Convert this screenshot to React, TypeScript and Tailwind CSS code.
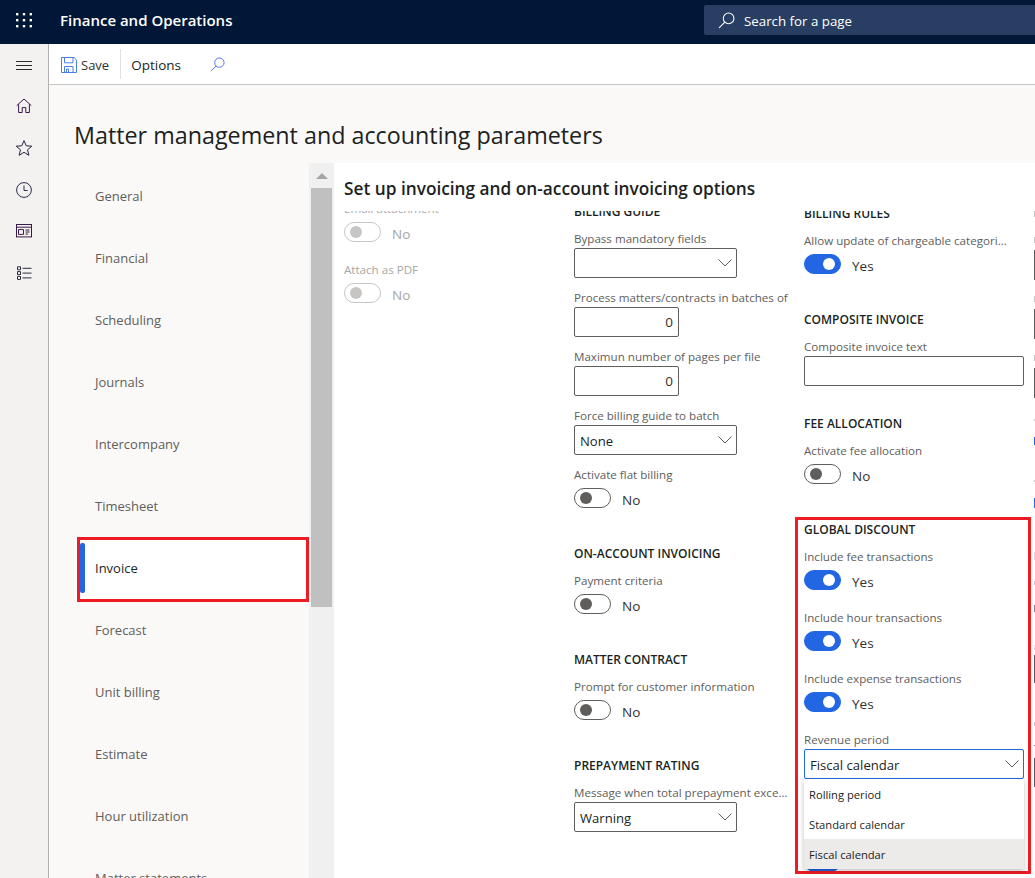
const font = "font-['Open_Sans','Noto_Sans',sans-serif]"

const tabs = [
  "General",
  "Financial",
  "Scheduling",
  "Journals",
  "Intercompany",
  "Timesheet",
  "Invoice",
  "Forecast",
  "Unit billing",
  "Estimate",
  "Hour utilization",
  "Matter statements",
]

function GridIcon() {
  const xs = [0, 6.8, 13.6]
  const ys = [0, 6, 12]
  return (
    <svg width="16" height="15" viewBox="0 0 16 15" fill="#fff">
      {ys.map((y) => xs.map((x) => <rect key={`${x}-${y}`} x={x} y={y} width="2.4" height="2.4" />))}
    </svg>
  )
}

function SearchGlyph({ className, size }: { className?: string; size: number }) {
  return (
    <svg width={size} height={size} viewBox="0 0 16 16" fill="none" stroke="currentColor" strokeWidth="1" className={className}>
      <circle cx="10" cy="6" r="5" />
      <path d="M6.4 9.6 1 15" />
    </svg>
  )
}

function RailIcons() {
  return (
    <div className="flex flex-col items-center">
      <svg width="48" height="40" viewBox="0 0 48 40" stroke="#2b2b2b" strokeWidth="1">
        <path d="M16 17.5h16M16 21.5h16M16 25.5h16" />
      </svg>
      <svg className="mt-[14px]" width="16" height="16" viewBox="0 0 16 16" fill="none" stroke="#3a1a4a" strokeWidth="1">
        <path d="M.7 7.6 8 1l7.3 6.6M2.6 6.2v8.3h3.6V9.6h3.6v4.9h3.6V6.2" />
      </svg>
      <svg className="mt-[25px]" width="18" height="18" viewBox="0 0 18 18" fill="none" stroke="#2a2440" strokeWidth="1">
        <path d="M9 1.6l2.2 5.2 5.6.4-4.3 3.6 1.4 5.5L9 13.3l-4.9 3 1.4-5.5L1.2 7.2l5.6-.4z" />
      </svg>
      <svg className="mt-[25px]" width="16" height="16" viewBox="0 0 16 16" fill="none" stroke="#2a2a50" strokeWidth="1">
        <circle cx="8" cy="8" r="7.4" />
        <path d="M8 3.5V8.5h3.6" />
      </svg>
      <svg className="mt-[26px]" width="16" height="14" viewBox="0 0 16 14" fill="none" stroke="#3a1a4a" strokeWidth="1">
        <rect x=".5" y=".5" width="15" height="12.4" />
        <path d="M.5 3.2h15M2.5 5.6h5v4.8h-5zM9.5 6h4M9.5 8h4M9.5 10h2.5" />
      </svg>
      <svg className="mt-[28px]" width="15" height="14" viewBox="0 0 15 14" fill="none" stroke="#2a2a40" strokeWidth="1">
        <path d="M.5.8h3v3h-3zM.5 5.6h3v3h-3zM.5 10.4h3v3h-3zM5.5 2.3h9M5.5 7.1h9M5.5 11.9h9" />
      </svg>
    </div>
  )
}

function Label({ children, muted }: { children: React.ReactNode; muted?: boolean }) {
  return (
    <div className={`h-[19px] truncate text-[11.6px] leading-[19px] ${muted ? "text-[#a6a6a6]" : "text-[#605e5c]"}`}>{children}</div>
  )
}

function Heading({ children, className }: { children: React.ReactNode; className?: string }) {
  return <div className={`h-[20px] text-[12px] font-semibold leading-[22px] text-[#201f1e] ${className ?? ""}`}>{children}</div>
}

function Toggle({ on, disabled }: { on?: boolean; disabled?: boolean }) {
  const track = on
    ? "justify-end border-[#2266e3] bg-[#2266e3]"
    : disabled
      ? "border-[#c8c6c4] bg-white"
      : "border-[#605e5c] bg-white"
  const knob = on ? "bg-white" : disabled ? "bg-[#c8c6c4]" : "bg-[#605e5c]"
  const text = disabled ? "text-[#a6a6a6]" : "text-[#323130]"
  return (
    <div className="mt-[4px] flex h-[23px] items-start">
      <div className={`flex h-[20px] w-[37px] items-center rounded-full border px-[5px] ${track}`}>
        <div className={`size-[12px] rounded-full ${knob}`} />
      </div>
      <span className={`ml-[11px] mt-[2px] text-[13.5px] leading-[20px] ${text}`}>{on ? "Yes" : "No"}</span>
    </div>
  )
}

function SelectBox({ value, className }: { value?: string; className?: string }) {
  return (
    <div className={`flex h-[30px] items-center justify-between rounded-[2px] border border-[#605e5c] pl-[5px] pr-[4px] text-[13.1px] text-[#201f1e] ${className ?? ""}`}>
      <span className="mt-[3px]">{value}</span>
      <svg width="14" height="8" viewBox="0 0 14 8" fill="none" stroke="#605e5c" strokeWidth="1">
        <path d="M.5.5 7 7l6.5-6.5" />
      </svg>
    </div>
  )
}

function NumberBox() {
  return (
    <div className="flex h-[30px] w-[105px] items-center justify-end rounded-[2px] border border-[#605e5c] pr-[5px] text-[13.5px] text-[#323130]">
      0
    </div>
  )
}

// the next column is scrolled almost out of view, one pixel of it shows at the edge
function EdgeColumn() {
  return (
    <div className="-mt-[10px] w-[20px] shrink-0">
      <div className="mt-[10px] h-[6px] w-px bg-[#c8c6c4]" />
      <div className="mt-[20px] h-[6px] w-px bg-[#c8c6c4]" />
      <div className="mt-[7px] h-[30px] w-px bg-[#605e5c]" />
      <div className="mt-[16px] h-[6px] w-px bg-[#c8c6c4]" />
      <div className="mt-[7px] h-[30px] w-px bg-[#605e5c]" />
      <div className="mt-[16px] h-[6px] w-px bg-[#c8c6c4]" />
      <div className="mt-[7px] h-[30px] w-px bg-[#605e5c]" />
      <div className="mt-[21px] h-[2px] w-px bg-[#c8c6c4]" />
      <div className="mt-[16px] h-[8px] w-px bg-[#2266e3]" />
      <div className="mt-[35px] h-[2px] w-px bg-[#c8c6c4]" />
      <div className="mt-[16px] h-[10px] w-px bg-[#2266e3]" />
      <div className="mt-[44px] h-[8px] w-px bg-[#e1dfdd]" />
      <div className="mt-[21px] h-[4px] w-px bg-[#c8c6c4]" />
      <div className="mt-[20px] h-[7px] w-px bg-[#808080]" />
      <div className="mt-[33px] h-[5px] w-px bg-[#e1dfdd]" />
      <div className="mt-[5px] h-[28px] w-px bg-[#605e5c]" />
      <div className="mt-[39px] h-[4px] w-px bg-[#c8c6c4]" />
      <div className="mt-[19px] h-px w-px bg-[#808080]" />
      <div className="mt-[12px] h-[29px] w-px bg-[#605e5c]" />
    </div>
  )
}

export default function App() {
  return (
    <div className={`relative flex h-[878px] w-[1035px] flex-col overflow-hidden bg-white ${font}`}>
      {/* Top bar */}
      <header className="flex h-[44px] shrink-0 items-center bg-[#001737]">
        <div className="mb-[4px] ml-[16px] flex">
          <GridIcon />
        </div>
        <span className="mb-[4px] ml-[28px] text-[15px] font-semibold text-white">Finance and Operations</span>
        <div className="mb-[4px] ml-auto flex h-[30px] w-[331px] items-center rounded-l-[2px] bg-[#283f63] pl-[14px] text-white">
          <SearchGlyph size={17} />
          <span className="ml-[9px] mt-[3px] text-[13.3px]">Search for a page</span>
        </div>
      </header>

      <div className="flex min-h-0 flex-1">
        <aside className="w-[49px] shrink-0 border-r border-[#b3b0ad] bg-[#f3f2f1]">
          <RailIcons />
        </aside>

        <main className="flex min-w-0 flex-1 flex-col">
          {/* Action pane */}
          <div className="flex h-[41px] shrink-0 items-center border-b border-[#c8c6c4] bg-white text-[#323130]">
            <svg className="ml-[12px] mt-[1px]" width="16" height="16" viewBox="0 0 16 16" fill="none" stroke="#4a7fe8" strokeWidth="1">
              <path d="M.5.5h12.6l2.4 2.4v12.6H.5zM3.5.8v5h8.5v-5M3.5 15.2V9.5h8.5v5.7M5.5 15v-3h2v3" />
            </svg>
            <span className="ml-[4px] mt-[3px] text-[13px]">Save</span>
            <div className="ml-[11px] h-[30px] w-px bg-[#e1dfdd]" />
            <span className="ml-[10px] mt-[2px] text-[13.5px] font-medium text-[#201f1e]">Options</span>
            <SearchGlyph size={15} className="ml-[29px] mt-[1px] text-[#4f6bed]" />
          </div>

          <div className="flex min-h-0 flex-1 flex-col bg-[#faf9f8]">
            <h1 className="ml-[25px] mt-[31px] h-[38px] shrink-0 text-[23.3px] font-normal leading-[38px] text-[#201f1e]">
              Matter management and accounting parameters
            </h1>

            <div className="mt-[9px] flex min-h-0 flex-1">
              {/* Tabs */}
              <nav className="w-[260px] shrink-0 overflow-hidden pt-[3px]">
                {tabs.map((tab) => (
                  <div
                    key={tab}
                    className={`relative flex h-[62px] items-center text-[13px] ${
                      tab === "Invoice" ? "ml-[25px] bg-white pl-[21px] text-[#201f1e]" : "pl-[46px] text-[#605e5c]"
                    }`}
                  >
                    {tab === "Invoice" && <div className="absolute left-[6px] top-[5px] h-[50px] w-[5px] rounded-[2px] bg-[#2266e3]" />}
                    {tab}
                  </div>
                ))}
              </nav>

              {/* Scrollbar */}
              <div className="w-[25px] shrink-0 bg-[#f0f0f0] px-[2px]">
                <div className="flex h-[25px] items-center justify-center">
                  <div className="size-0 border-x-[6px] border-b-[6px] border-x-transparent border-b-[#a6a6a6]" />
                </div>
                <div className="h-[419px] bg-[#c0c0c0]" />
              </div>

              {/* Form */}
              <section className="flex min-w-0 flex-1 flex-col overflow-hidden bg-white">
                <h2 className="ml-[10px] mt-[14px] h-[24px] shrink-0 text-[17.25px] font-semibold leading-[24px] text-[#201f1e]">
                  Set up invoicing and on-account invoicing options
                </h2>

                <div className="mt-[10px] flex min-h-0 flex-1 overflow-hidden pl-[10px]">
                  {/* Column 1 */}
                  <div className="-mt-[12px] w-[230px] shrink-0">
                    <Label muted>Email attachment</Label>
                    <Toggle disabled />
                    <div className="mt-[15px]">
                      <Label muted>Attach as PDF</Label>
                      <Toggle disabled />
                    </div>
                  </div>

                  {/* Column 2 */}
                  <div className="-mt-[10px] w-[230px] shrink-0">
                    <Heading>BILLING GUIDE</Heading>
                    <div className="mt-[8px]">
                      <Label>Bypass mandatory fields</Label>
                      <SelectBox className="w-[163px]" />
                    </div>
                    <div className="mt-[10px]">
                      <Label>Process matters/contracts in batches of</Label>
                      <NumberBox />
                    </div>
                    <div className="mt-[10px]">
                      <Label>Maximun number of pages per file</Label>
                      <NumberBox />
                    </div>
                    <div className="mt-[10px]">
                      <Label>Force billing guide to batch</Label>
                      <SelectBox value="None" className="w-[163px]" />
                    </div>
                    <div className="mt-[10px]">
                      <Label>Activate flat billing</Label>
                      <Toggle />
                    </div>
                    <Heading className="mt-[32px]">ON-ACCOUNT INVOICING</Heading>
                    <div className="mt-[8px]">
                      <Label>Payment criteria</Label>
                      <Toggle />
                    </div>
                    <Heading className="mt-[32px]">MATTER CONTRACT</Heading>
                    <div className="mt-[8px]">
                      <Label>Prompt for customer information</Label>
                      <Toggle />
                    </div>
                    <Heading className="mt-[32px]">PREPAYMENT RATING</Heading>
                    <div className="mt-[8px]">
                      <div className="w-[220px]">
                        <Label>Message when total prepayment exce...</Label>
                      </div>
                      <SelectBox value="Warning" className="w-[163px]" />
                    </div>
                  </div>

                  {/* Column 3 */}
                  <div className="-mt-[8px] w-[230px] shrink-0 pr-[10px]">
                    <Heading>BILLING RULES</Heading>
                    <div className="mt-[8px]">
                      <Label>Allow update of chargeable categori...</Label>
                      <Toggle on />
                    </div>
                    <Heading className="mt-[32px]">COMPOSITE INVOICE</Heading>
                    <div className="mt-[8px]">
                      <Label>Composite invoice text</Label>
                      <div className="h-[30px] rounded-[2px] border border-[#605e5c]" />
                    </div>
                    <Heading className="mt-[27px]">FEE ALLOCATION</Heading>
                    <div className="mt-[8px]">
                      <Label>Activate fee allocation</Label>
                      <Toggle />
                    </div>
                    <Heading className="mt-[32px]">GLOBAL DISCOUNT</Heading>
                    <div className="mt-[8px]">
                      <Label>Include fee transactions</Label>
                      <Toggle on />
                    </div>
                    <div className="mt-[15px]">
                      <Label>Include hour transactions</Label>
                      <Toggle on />
                    </div>
                    <div className="mt-[15px]">
                      <Label>Include expense transactions</Label>
                      <Toggle on />
                    </div>
                    <div className="relative mt-[15px]">
                      <Label>Revenue period</Label>
                      <SelectBox value="Fiscal calendar" className="!border-[#2266e3] bg-white" />
                      {/* Open dropdown */}
                      <div className="absolute left-0 top-[49px] z-10 w-full bg-white text-[11.2px] text-[#201f1e] shadow-[0_2px_5px_rgba(0,0,0,0.25)]">
                        <div className="flex h-[30px] items-center pl-[5px] pt-[2px]">Rolling period</div>
                        <div className="flex h-[30px] items-center pl-[5px] pt-[2px]">Standard calendar</div>
                        <div className="flex h-[30px] items-center bg-[#edebe9] pl-[5px] pt-[2px]">Fiscal calendar</div>
                      </div>
                      <div className="mt-[73px]">
                        <Toggle on />
                      </div>
                    </div>
                  </div>

                  <EdgeColumn />
                </div>
              </section>
            </div>
          </div>
        </main>
      </div>

      {/* Callout boxes drawn over the screenshot */}
      <div className="pointer-events-none absolute left-[77px] top-[537px] h-[65px] w-[232px] border-[3px] border-[#ed1c24]" />
      <div className="pointer-events-none absolute left-[795px] top-[517px] h-[357px] w-[236px] border-[3px] border-[#ed1c24]" />
    </div>
  )
}
